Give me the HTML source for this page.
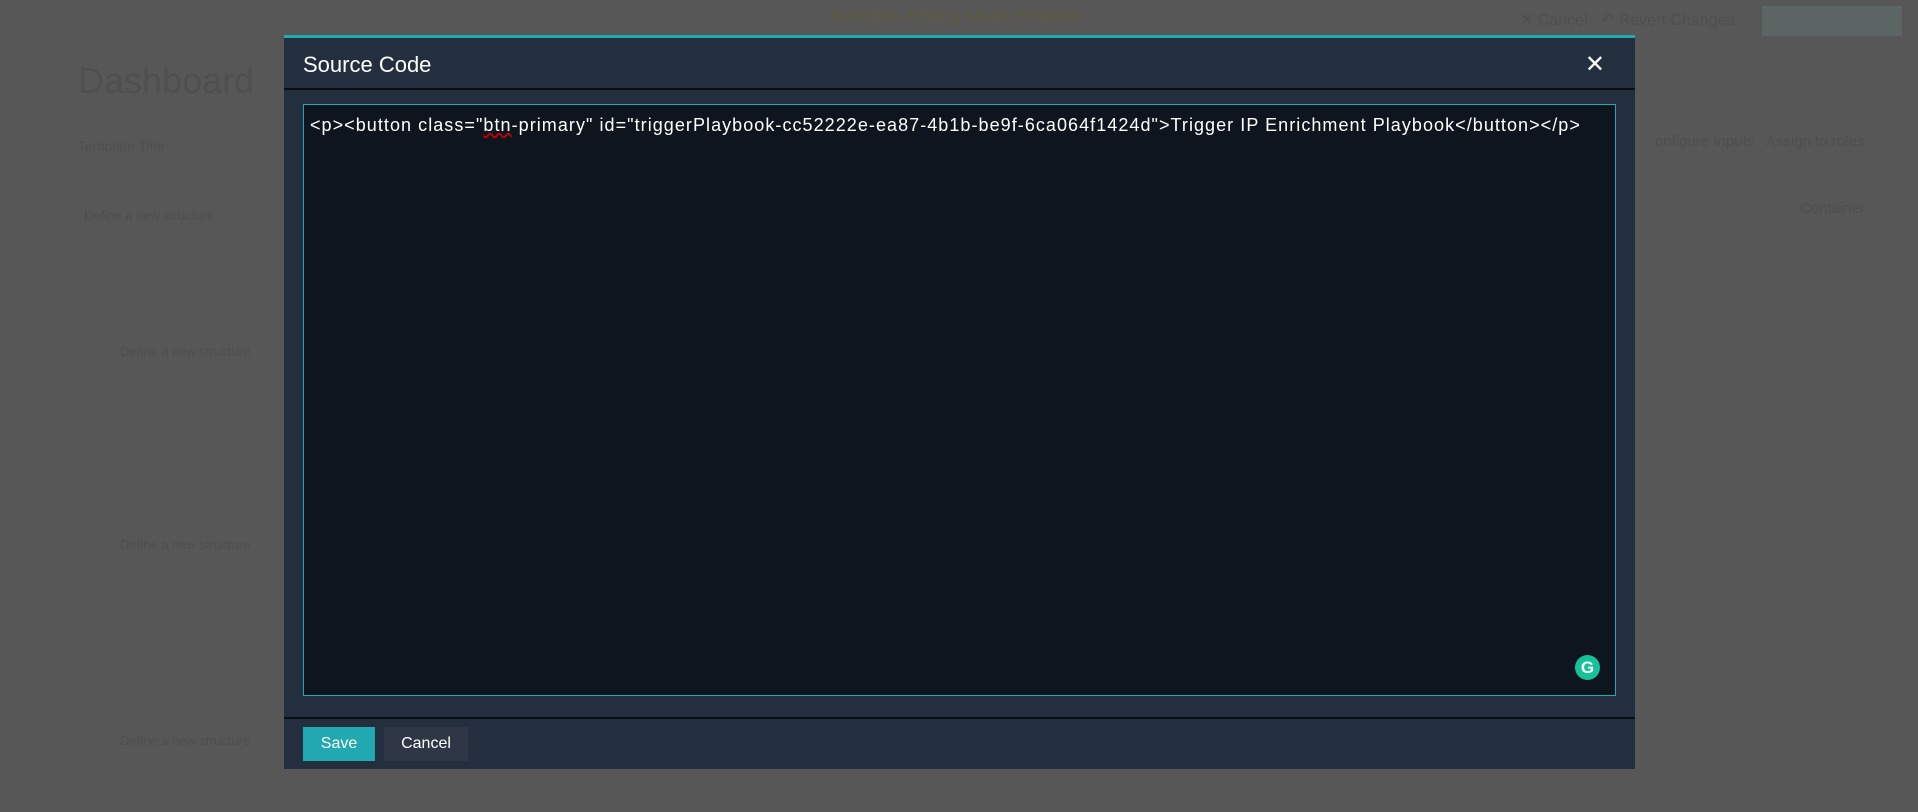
<!DOCTYPE html>
<html><head><meta charset="utf-8"><style>
body{margin:0;width:1918px;height:812px;background:#575757;font-family:"Liberation Sans",sans-serif;position:relative;overflow:hidden}
.f{position:absolute;color:#4f4f4f;white-space:nowrap}
.modal{position:absolute;left:284px;top:35px;width:1351px;height:734px;background:#232f3f;border-top:3px solid #22a8b0;box-sizing:border-box}
.title{position:absolute;left:19px;top:14px;color:#fff;font-size:22px}
.close{position:absolute;right:30px;top:12px;color:#fff;font-size:24px}
.hl{position:absolute;left:0;right:0;height:2px;background:#0b0f14}
.ta{position:absolute;left:19px;top:66px;width:1313px;height:592px;background:#0e151e;border:1px solid #22a8b0;box-sizing:border-box}
.code{position:absolute;left:6px;top:10px;color:#fff;font-size:18px;white-space:nowrap;letter-spacing:1.05px}
.btn{position:absolute;top:689px;height:34px;line-height:34px;color:#fff;font-size:16px;text-align:center}
</style></head><body>
<div class="f" style="left:78px;top:60px;font-size:36px">Dashboard</div>
<div class="f" style="left:828px;top:6px;font-size:18px;color:#5d5a44">Template Editing Mode Enabled</div>
<div class="f" style="left:1520px;top:10px;font-size:16px">✕ Cancel &nbsp; ↶ Revert Changes</div>
<div style="position:absolute;left:1762px;top:6px;width:140px;height:30px;background:#5b6563"></div>
<div class="f" style="left:78px;top:138px;font-size:14px">Template Title</div>
<div class="f" style="left:84px;top:208px;font-size:13px">Define a new structure</div>
<div class="f" style="left:120px;top:344px;font-size:13px">Define a new structure</div>
<div class="f" style="left:120px;top:537px;font-size:13px">Define a new structure</div>
<div class="f" style="left:120px;top:733px;font-size:13px">Define a new structure</div>
<div class="f" style="left:1655px;top:133px;font-size:15px">onfigure Inputs &nbsp; Assign to roles</div>
<div class="f" style="left:1800px;top:200px;font-size:15px">Container</div>
<div class="modal">
<div class="title">Source Code</div>
<div class="close">✕</div>
<div class="hl" style="top:50px"></div>
<div class="ta"><div class="code">&lt;p&gt;&lt;button class="<span style="text-decoration:underline wavy #c00">btn</span>-primary" id="triggerPlaybook-cc52222e-ea87-4b1b-be9f-6ca064f1424d"&gt;Trigger IP Enrichment Playbook&lt;/button&gt;&lt;/p&gt;</div>
<div style="position:absolute;left:1271px;top:550px;width:25px;height:25px;border-radius:50%;background:#15c39a;color:#fff;font-size:17px;font-weight:bold;text-align:center;line-height:25px">G</div></div>
<div class="hl" style="top:679px"></div>
<div class="btn" style="left:19px;width:72px;background:#22a8b0">Save</div>
<div class="btn" style="left:100px;width:84px;background:#2f3746">Cancel</div>
</div>
</body></html>
